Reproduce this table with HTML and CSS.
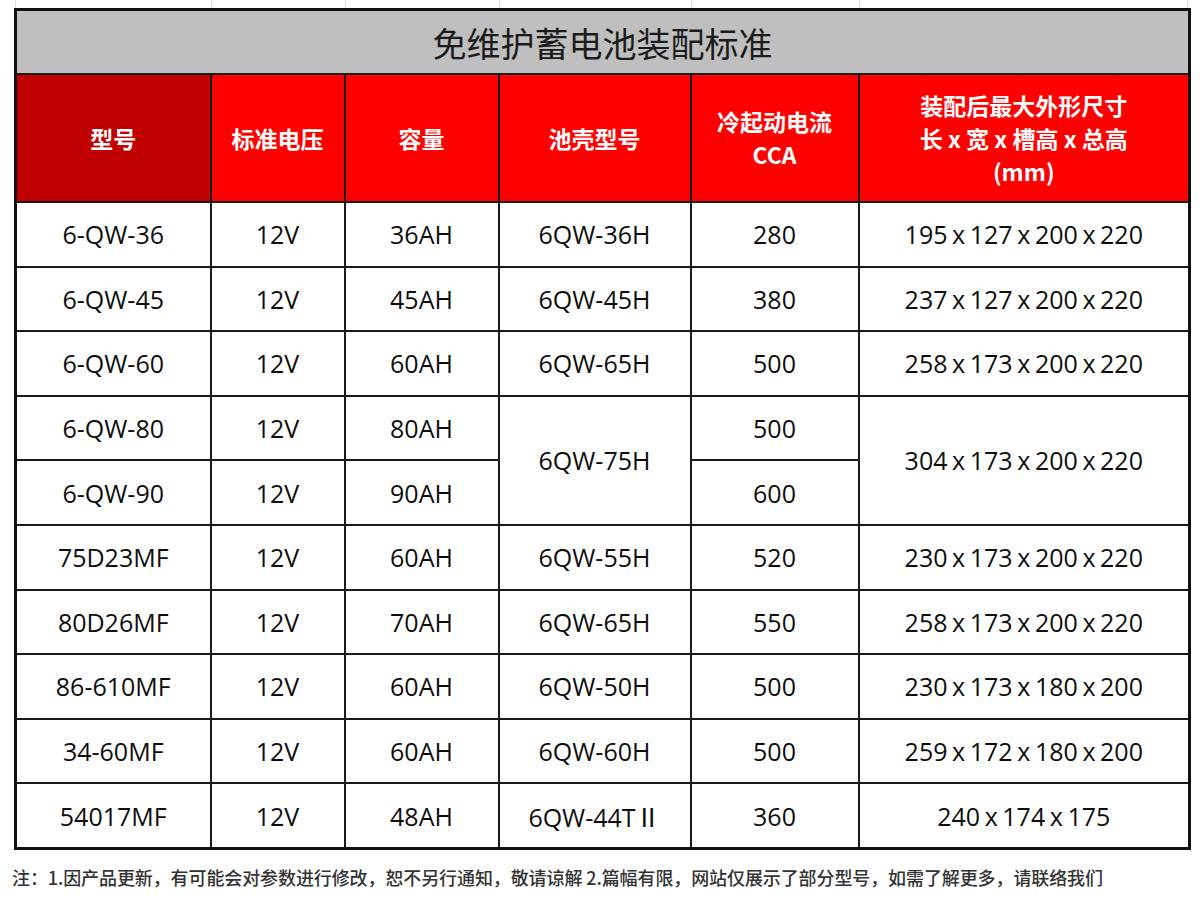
FILE: index.html
```html
<!DOCTYPE html>
<html lang="zh-CN">
<head>
<meta charset="utf-8">
<title>免维护蓄电池装配标准</title>
<link rel="stylesheet" href="styles.css">
</head>
<body>
<div class="sheet">
  <div class="stubs">
    <span class="stub s1"></span><span class="stub s2"></span><span class="stub s3"></span><span class="stub s4"></span><span class="stub s5"></span><span class="stub s6"></span><span class="stub s7"></span>
  </div>
  <table class="spec">
    <colgroup>
      <col class="c1"><col class="c2"><col class="c3"><col class="c4"><col class="c5"><col class="c6">
    </colgroup>
    <tr class="title-row"><td colspan="6" class="title">免维护蓄电池装配标准</td></tr>
    <tr class="head-row">
      <th class="dark">型号</th>
      <th>标准电压</th>
      <th>容量</th>
      <th>池壳型号</th>
      <th>冷起动电流<br>CCA</th>
      <th>装配后最大外形尺寸<br>长 x 宽 x 槽高 x 总高<br>(mm)</th>
    </tr>
    <tr><td>6-QW-36</td><td>12V</td><td>36AH</td><td>6QW-36H</td><td>280</td><td class="dim">195 x 127 x 200 x 220</td></tr>
    <tr><td>6-QW-45</td><td>12V</td><td>45AH</td><td>6QW-45H</td><td>380</td><td class="dim">237 x 127 x 200 x 220</td></tr>
    <tr><td>6-QW-60</td><td>12V</td><td>60AH</td><td>6QW-65H</td><td>500</td><td class="dim">258 x 173 x 200 x 220</td></tr>
    <tr><td>6-QW-80</td><td>12V</td><td>80AH</td><td rowspan="2">6QW-75H</td><td>500</td><td rowspan="2" class="dim">304 x 173 x 200 x 220</td></tr>
    <tr><td>6-QW-90</td><td>12V</td><td>90AH</td><td>600</td></tr>
    <tr><td>75D23MF</td><td>12V</td><td>60AH</td><td>6QW-55H</td><td>520</td><td class="dim">230 x 173 x 200 x 220</td></tr>
    <tr><td>80D26MF</td><td>12V</td><td>70AH</td><td>6QW-65H</td><td>550</td><td class="dim">258 x 173 x 200 x 220</td></tr>
    <tr><td>86-610MF</td><td>12V</td><td>60AH</td><td>6QW-50H</td><td>500</td><td class="dim">230 x 173 x 180 x 200</td></tr>
    <tr><td>34-60MF</td><td>12V</td><td>60AH</td><td>6QW-60H</td><td>500</td><td class="dim">259 x 172 x 180 x 200</td></tr>
    <tr><td>54017MF</td><td>12V</td><td>48AH</td><td>6QW-44TⅡ</td><td>360</td><td class="dim">240 x 174 x 175</td></tr>
  </table>
  <p class="note">注：1.因产品更新，有可能会对参数进行修改，恕不另行通知，敬请谅解 2.篇幅有限，网站仅展示了部分型号，如需了解更多，请联络我们</p>
</div>
</body>
</html>
```
FILE: styles.css
```css
html, body {
  margin: 0;
  padding: 0;
  background: #ffffff;
}
body {
  font-family: "Open Sans", "Noto Sans CJK SC", sans-serif;
  color: #111111;
}
.sheet {
  width: 1200px;
  height: 922px;
  overflow: hidden;
}
.stubs {
  position: relative;
  height: 8px;
}
.stub {
  position: absolute;
  top: 0;
  width: 1px;
  height: 8px;
  background: #dcdfe8;
}
.s1 { left: 15px; }
.s2 { left: 211px; }
.s3 { left: 345px; }
.s4 { left: 499px; }
.s5 { left: 691px; }
.s6 { left: 859px; }
.s7 { left: 1187px; }

.spec {
  margin-left: 14px;
  border-collapse: collapse;
  table-layout: fixed;
  width: 1174px;
  border: 3px solid #111111;
}
.c1 { width: 195px; }
.c2 { width: 134px; }
.c3 { width: 154px; }
.c4 { width: 192px; }
.c5 { width: 168px; }
.c6 { width: 331px; }

.spec td, .spec th {
  border: 2px solid #1a1a1a;
  text-align: center;
  vertical-align: middle;
  padding: 0;
}
.spec td {
  height: 62.6px;
  font-size: 25px;
  color: #0d0d0d;
}
.title-row .title {
  height: 62px;
  background: #bfbfbf;
  font-family: "Noto Sans CJK SC", sans-serif;
  font-size: 34px;
  color: #1c1c1c;
  border-bottom-width: 2px;
}
.head-row th {
  height: 126px;
  background: #ff0000;
  color: #ffffff;
  font-family: "Noto Sans CJK SC", sans-serif;
  font-weight: 700;
  font-size: 23px;
  line-height: 33px;
}
.head-row th.dark {
  background: #c00000;
}
.dim {
  word-spacing: -1.9px;
}
.note {
  margin: 14px 0 0 12px;
  font-family: "Noto Sans CJK SC", sans-serif;
  font-size: 18px;
  font-weight: 500;
  color: #333333;
  white-space: nowrap;
  letter-spacing: -0.1px;
}
```
